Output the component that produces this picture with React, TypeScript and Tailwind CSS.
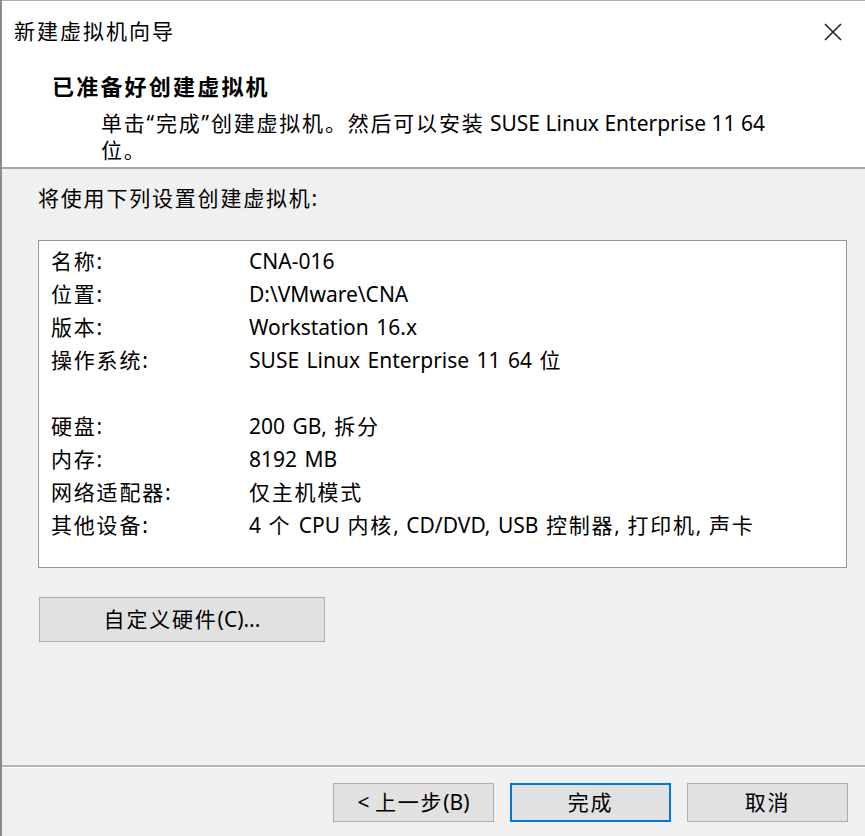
// wrap runs of CJK text so they get the wider spacing of the original dialog font
function T({ text }: { text: string }) {
    const parts = text.split(/([\u3000-\u303f\u4e00-\u9fff\uff00-\uffef“”]+)/);
    return (
        <>
            {parts.map((p, i) =>
                i % 2 === 1 ? (
                    <span key={i} className="tracking-[1.8px]">
                        {p}
                    </span>
                ) : (
                    <span key={i}>{p}</span>
                )
            )}
        </>
    );
}

export default function App() {
    const rows: [string, string][] = [
        ["名称:", "CNA-016"],
        ["位置:", "D:\\VMware\\CNA"],
        ["版本:", "Workstation 16.x"],
        ["操作系统:", "SUSE Linux Enterprise 11 64 位"],
        ["", ""],
        ["硬盘:", "200 GB, 拆分"],
        ["内存:", "8192 MB"],
        ["网络适配器:", "仅主机模式"],
        ["其他设备:", "4 个 CPU 内核, CD/DVD, USB 控制器, 打印机, 声卡"],
    ];

    return (
        <div
            className="w-[865px] h-[836px] flex flex-col bg-[#f0f0f0] border-l-2 border-[#8a8a8a] text-black"
            style={{ fontFamily: '"Noto Sans", "Noto Sans CJK SC", sans-serif' }}
        >
            {/* header */}
            <div className="h-[169px] bg-white border-b-2 border-[#a8a8a8] border-t border-t-[#b0b0b0]">
                <div className="h-[61px] flex items-center justify-between pl-[12px] pr-[22px]">
                    <span className="text-[21px] tracking-[2px]">新建虚拟机向导</span>
                    <svg width="20" height="20" viewBox="0 0 20 20" className="text-[#222]">
                        <path d="M2 2 L18 18 M18 2 L2 18" stroke="currentColor" strokeWidth="1.6" />
                    </svg>
                </div>
                <div className="pl-[50px] pt-[8px] text-[22px] font-bold leading-[33px] tracking-[2.2px]">
                    已准备好创建虚拟机
                </div>
                <div className="pl-[99px] mt-[7px] text-[21px] leading-[27px]">
                    <T text="单击“完成”创建虚拟机。然后可以安装 SUSE Linux Enterprise 11 64" />
                    <br />
                    <T text="位。" />
                </div>
            </div>

            {/* body */}
            <div className="flex-1 flex flex-col pl-[36px] pt-[14px]">
                <div className="text-[21px] leading-[30px]">
                    <T text="将使用下列设置创建虚拟机:" />
                </div>
                <div className="mt-[27px] w-[809px] h-[328px] bg-white border border-[#9a9a9a] pl-[12px] pt-[4px]">
                    {rows.map(([label, value], i) => (
                        <div key={i} className="flex h-[33px] items-center text-[21px]">
                            <span className="w-[198px]">
                                <T text={label} />
                            </span>
                            <span className="[word-spacing:2px]">
                                <T text={value} />
                            </span>
                        </div>
                    ))}
                </div>
                <button className="mt-[29px] ml-[1px] w-[286px] h-[45px] bg-[#e1e1e1] border border-[#adadad] text-[21px]">
                    <T text="自定义硬件(C)..." />
                </button>
            </div>

            {/* footer */}
            <div className="h-[71px] border-t-2 border-[#b4b4b4]">
                <div className="h-px bg-white" />
                <div className="flex justify-end gap-[16px] pr-[17px] pt-[15px]">
                    <button className="w-[161px] h-[39px] bg-[#e1e1e1] border border-[#adadad] text-[21px]">
                        <T text="< 上一步(B)" />
                    </button>
                    <button className="w-[161px] h-[39px] bg-[#e1e1e1] border-2 border-[#0078d7] text-[21px]">
                        <T text="完成" />
                    </button>
                    <button className="w-[161px] h-[39px] bg-[#e1e1e1] border border-[#adadad] text-[21px]">
                        <T text="取消" />
                    </button>
                </div>
            </div>
        </div>
    );
}
